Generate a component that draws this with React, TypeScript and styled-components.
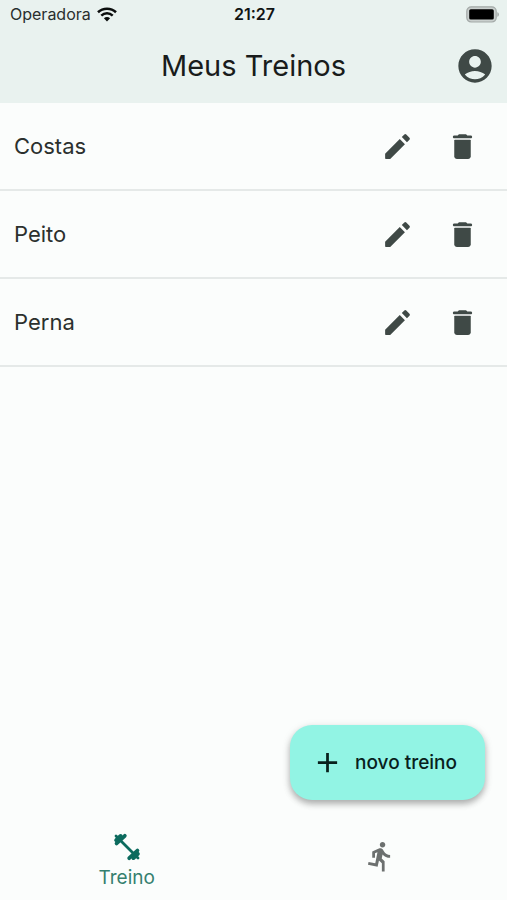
import React from "react";
import styled, { createGlobalStyle } from "styled-components";
import { MdAccountCircle, MdAdd, MdDirectionsRun } from "react-icons/md";

const GlobalStyle = createGlobalStyle`
  *, *::before, *::after { box-sizing: border-box; }
  body {
    margin: 0;
    background: #fbfdfc;
    color: #191c1b;
    font-family: Inter, "Liberation Sans", sans-serif;
  }
  button { font: inherit; color: inherit; border: 0; padding: 0; background: none; cursor: pointer; }
`;

const Screen = styled.div`
  display: flex;
  flex-direction: column;
  min-height: 100vh;
`;

const Header = styled.header`
  background: #e9f2ef;
`;

const StatusBar = styled.div`
  display: grid;
  grid-template-columns: 1fr auto 1fr;
  align-items: center;
  height: 28px;
  padding: 0 8px 0 10px;
  font-size: 16px;
  line-height: 28px;
`;

const Carrier = styled.div`
  display: flex;
  align-items: center;
  gap: 6px;
  color: #2a2f2e;
`;

const Clock = styled.time`
  color: #101413;
  font-weight: 600;
`;

const BatteryIcon = styled.svg`
  justify-self: end;
`;

const TitleBar = styled.div`
  display: grid;
  grid-template-columns: 48px 1fr 48px;
  align-items: center;
  height: 75px;
  padding: 0 8px;
`;

const Title = styled.h1`
  grid-column: 2;
  margin: 0;
  text-align: center;
  font-size: 29px;
  font-weight: 400;
  line-height: 40px;
`;

const IconButton = styled.button<{ $size: number }>`
  display: grid;
  place-items: center;
  width: ${({ $size }) => $size}px;
  height: ${({ $size }) => $size}px;
  border-radius: 50%;
  color: #3f4946;
`;

const List = styled.ul`
  flex: 1;
  margin: 0;
  padding: 0;
  list-style: none;
`;

const Row = styled.li`
  display: flex;
  align-items: center;
  height: 88px;
  padding: 0 13px 0 14px;
  border-bottom: 2px solid #e5e9e8;
`;

const RowName = styled.span`
  flex: 1;
  font-size: 22px;
  line-height: 32px;
  color: #2b302e;
`;

const RowActions = styled.div`
  display: flex;
  gap: 1px;
`;

const Fab = styled.button`
  align-self: flex-end;
  display: flex;
  align-items: center;
  gap: 11px;
  height: 75px;
  margin: 0 22px 24px;
  && {
    padding: 0 28px 0 21px;
    background: #92f4e4;
    color: #08201c;
    font-size: 19px;
    font-weight: 500;
  }
  border-radius: 22px;
  box-shadow: 0 4px 6px rgba(0, 0, 0, 0.26), 0 2px 10px rgba(0, 0, 0, 0.1);
`;

const BottomNav = styled.nav`
  display: grid;
  grid-template-columns: 1fr 1fr;
  height: 76px;
`;

const NavItem = styled.button<{ $active?: boolean }>`
  display: flex;
  flex-direction: column;
  align-items: center;
  justify-content: flex-start;
  gap: 5px;
  && {
    padding-top: ${({ $active }) => ($active ? 9 : 16)}px;
    color: ${({ $active }) => ($active ? "#0c6b5e" : "#6c706f")};
  }
`;

const NavLabel = styled.span`
  font-size: 19px;
  line-height: 24px;
  color: #35806f;
`;

function Wifi() {
  return (
    <svg width="20" height="15" viewBox="0 0 20 15" fill="none" aria-hidden="true">
      <path d="M1 5.2C6 .6 14 .6 19 5.2" stroke="#0b0e0d" strokeWidth="2.6" />
      <path d="M4.3 8.6c3.2-3 8.2-3 11.4 0" stroke="#0b0e0d" strokeWidth="2.5" />
      <path d="M6.9 11.3c1.8-1.6 4.4-1.6 6.2 0L10 14.6z" fill="#0b0e0d" />
    </svg>
  );
}

function Battery() {
  return (
    <BatteryIcon width="33" height="17" viewBox="0 0 33 17" role="img" aria-label="Bateria">
      <rect x="0.8" y="0.8" width="29.4" height="15.2" rx="4.4" fill="#c9cfcd" stroke="#a3a9a7" strokeWidth="1.2" />
      <rect x="3.2" y="3.2" width="24.6" height="10.4" rx="1.6" fill="#000" />
      <path d="M31.4 6.2c2 .7 2 3.8 0 4.5z" fill="#9fa5a3" />
    </BatteryIcon>
  );
}

function Pencil() {
  return (
    <svg width="33" height="33" viewBox="0 0 24 24" fill="currentColor" aria-hidden="true">
      <path d="M3 17.46v3.04c0 .28.22.5.5.5h3.04c.13 0 .26-.05.35-.15L17.4 10.35l-3.75-3.75L3.15 17.1c-.1.1-.15.22-.15.36z" />
      <path d="M20.71 7.04a1 1 0 0 0 0-1.41l-2.34-2.34a1 1 0 0 0-1.41 0l-1.83 1.83 3.75 3.75 1.83-1.83z" />
    </svg>
  );
}

function Trash() {
  return (
    <svg width="33" height="33" viewBox="0 0 24 24" fill="currentColor" aria-hidden="true">
      <path d="M6 19c0 1.1.9 2 2 2h8c1.1 0 2-.9 2-2V7.5a.5.5 0 0 0-.5-.5h-11a.5.5 0 0 0-.5.5V19z" />
      <path d="M18 4h-2.5l-.71-.71c-.18-.18-.44-.29-.7-.29H9.91c-.26 0-.52.11-.7.29L8.5 4H6c-.55 0-1 .45-1 1s.45 1 1 1h12c.55 0 1-.45 1-1s-.45-1-1-1z" />
    </svg>
  );
}

function Dumbbell() {
  return (
    <svg width="28" height="28" viewBox="0 0 28 28" fill="none" stroke="currentColor" strokeLinecap="round" aria-hidden="true">
      <path d="M3 3l22 22" strokeWidth="2.8" />
      <path d="M3.6 10.4L11.8 2.8M16.2 25.2L24.4 17.6" strokeWidth="3.8" />
      <path d="M3.2 7.2L7.6 3M20.4 25L24.8 20.8" strokeWidth="4" />
    </svg>
  );
}

const workouts = ["Costas", "Peito", "Perna"];

export default function App() {
  return (
    <Screen>
      <GlobalStyle />
      <Header>
        <StatusBar>
          <Carrier>
            Operadora
            <Wifi />
          </Carrier>
          <Clock>21:27</Clock>
          <Battery />
        </StatusBar>
        <TitleBar>
          <Title>Meus Treinos</Title>
          <IconButton $size={48} aria-label="Perfil">
            <MdAccountCircle size={40} />
          </IconButton>
        </TitleBar>
      </Header>
      <List>
        {workouts.map((name) => (
          <Row key={name}>
            <RowName>{name}</RowName>
            <RowActions>
              <IconButton $size={64} aria-label={`Editar ${name}`}>
                <Pencil />
              </IconButton>
              <IconButton $size={64} aria-label={`Excluir ${name}`}>
                <Trash />
              </IconButton>
            </RowActions>
          </Row>
        ))}
      </List>
      <Fab>
        <MdAdd size={33} />
        novo treino
      </Fab>
      <BottomNav>
        <NavItem $active aria-current="page">
          <Dumbbell />
          <NavLabel>Treino</NavLabel>
        </NavItem>
        <NavItem aria-label="Corrida">
          <MdDirectionsRun size={33} />
        </NavItem>
      </BottomNav>
    </Screen>
  );
}
